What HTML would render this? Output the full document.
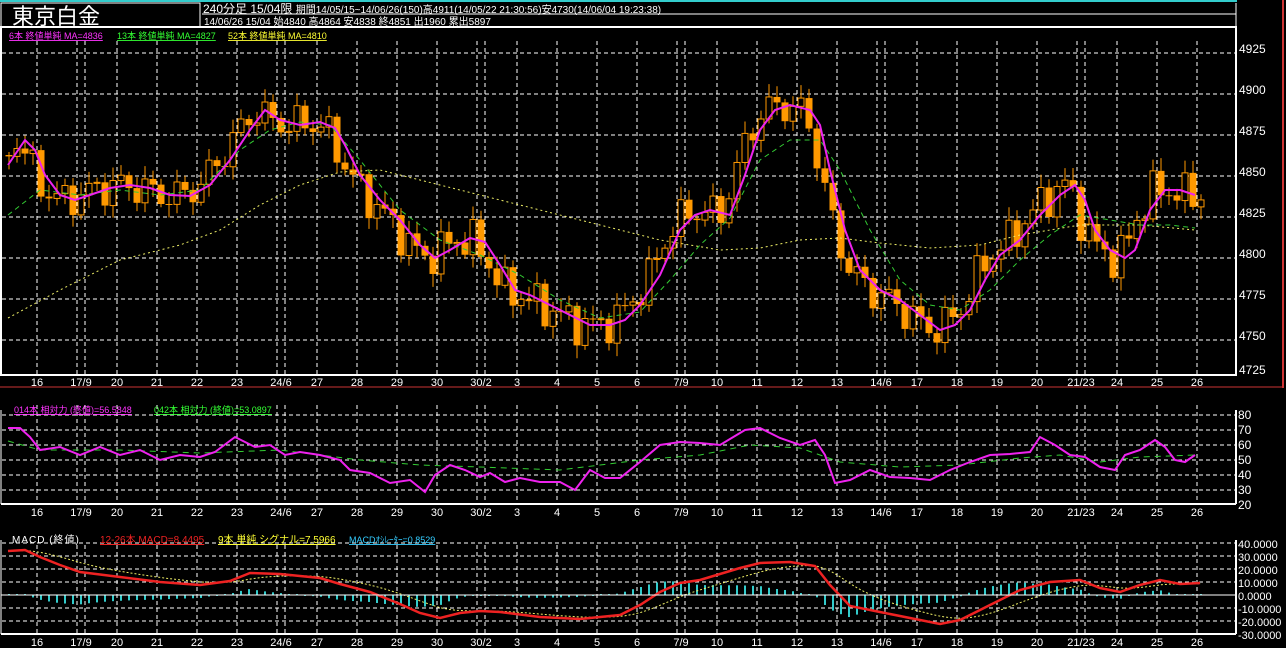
<!DOCTYPE html>
<html><head><meta charset="utf-8"><style>
html,body{margin:0;padding:0;background:#000;width:1286px;height:648px;overflow:hidden}
svg{position:absolute;left:0;top:0}
text{font-family:"Liberation Sans","Noto Sans CJK JP",sans-serif}
</style></head><body>
<svg id="s" width="1286" height="648" viewBox="0 0 1286 648" xmlns="http://www.w3.org/2000/svg">
<rect width="1286" height="648" fill="#000"/>
<line x1="0" y1="1" x2="1237" y2="1" stroke="#3cc" stroke-width="2"/>
<line x1="1283" y1="0" x2="1283" y2="388" stroke="#c33" stroke-width="2"/>
<line x1="0" y1="387" x2="1283" y2="387" stroke="#c33" stroke-width="1"/>
<rect x="1" y="3" width="199" height="24" fill="none" stroke="#fff" stroke-width="1"/>
<text x="12" y="24" fill="#fff" font-size="22">東京白金</text>
<line x1="202" y1="14" x2="1236" y2="14" stroke="#fff"/>
<line x1="202" y1="27" x2="1236" y2="27" stroke="#fff"/>
<line x1="1236" y1="3" x2="1236" y2="27" stroke="#fff"/>
<text x="203" y="13" fill="#fff" font-size="12">240分足 15/04限 <tspan font-size="10">期間14/05/15~14/06/26(150)高4911(14/05/22 21:30:56)安4730(14/06/04 19:23:38)</tspan></text>
<text x="204" y="25" fill="#fff" font-size="10">14/06/26 15/04 始4840 高4864 安4838 終4851 出1960 累出5897</text>
<text x="9" y="39" font-size="9" fill="#f3f" text-decoration="underline">6本 終値単純 MA=4836</text>
<text x="117" y="39" font-size="9" fill="#3f3" text-decoration="underline">13本 終値単純 MA=4827</text>
<text x="228" y="39" font-size="9" fill="#ff3" text-decoration="underline">52本 終値単純 MA=4810</text>
<g id="grid" stroke="#fff" stroke-dasharray="4,3" stroke-width="1"></g>
<g id="plot"></g>
<rect x="1" y="27" width="1235" height="348" fill="none" stroke="#fff" stroke-width="2"/>
<line x1="1" y1="504" x2="1236" y2="504" stroke="#fff" stroke-width="2"/>
<line x1="1236" y1="410" x2="1236" y2="504" stroke="#fff" stroke-width="2"/>
<line x1="1" y1="410" x2="1" y2="504" stroke="#fff" stroke-width="1"/>
<line x1="1" y1="634" x2="1236" y2="634" stroke="#fff" stroke-width="2"/>
<line x1="1236" y1="540" x2="1236" y2="634" stroke="#fff" stroke-width="2"/>
<line x1="1" y1="540" x2="1" y2="634" stroke="#fff" stroke-width="1"/>
<line x1="1" y1="595" x2="1236" y2="595" stroke="#fff" stroke-width="1"/>
<text x="14" y="413" font-size="9" fill="#f3f" text-decoration="underline">014本 相対力 (終値)=56.5848</text>
<text x="154" y="413" font-size="9" fill="#3f3" text-decoration="underline">042本 相対力 (終値)=53.0897</text>
<text x="12" y="543" font-size="10" fill="#fff" letter-spacing="1">MACD (終値)</text>
<text x="100" y="543" font-size="10" fill="#e22" text-decoration="underline">12-26本 MACD=8.4495</text>
<text x="218" y="543" font-size="10" fill="#ff3" text-decoration="underline">9本 単純 シグナル=7.5966</text>
<text x="349" y="543" font-size="9" fill="#3cf" text-decoration="underline">MACDｵｼﾚｰﾀｰ=0.8529</text>
<g id="labels" fill="#fff" font-size="12"></g>
</svg>
<script>
(function(){
var NS="http://www.w3.org/2000/svg";
function el(p,t,a,txt){var e=document.createElementNS(NS,t);for(var k in a)e.setAttribute(k,a[k]);if(txt!=null)e.textContent=txt;p.appendChild(e);return e;}
var g=document.getElementById('grid'),P=document.getElementById('plot'),L=document.getElementById('labels');
var vx=[37,77,85,117,157,197,237,277,285,317,357,397,437,477,485,517,557,597,637,677,685,717,757,797,837,877,885,917,957,997,1037,1077,1085,1117,1157,1197];
var panels=[[41,375],[405,504],[545,634]];
vx.forEach(function(x){panels.forEach(function(p){el(g,'line',{x1:x,y1:p[0],x2:x,y2:p[1]});});});
[53,94,135,176,217,258,299,340].forEach(function(y){el(g,'line',{x1:2,y1:y,x2:1236,y2:y});});
[415,430,445,460,475,490].forEach(function(y){el(g,'line',{x1:2,y1:y,x2:1236,y2:y});});
[543,556,569,582,608,621].forEach(function(y){el(g,'line',{x1:2,y1:y,x2:1236,y2:y});});
var dl=[[37,"16"],[81,"17/9"],[117,"20"],[157,"21"],[197,"22"],[237,"23"],[281,"24/6"],[317,"27"],[357,"28"],[397,"29"],[437,"30"],[481,"30/2"],[517,"3"],[557,"4"],[597,"5"],[637,"6"],[681,"7/9"],[717,"10"],[757,"11"],[797,"12"],[837,"13"],[881,"14/6"],[917,"17"],[957,"18"],[997,"19"],[1037,"20"],[1081,"21/23"],[1117,"24"],[1157,"25"],[1197,"26"]];
[386,516,646].forEach(function(y){dl.forEach(function(d){el(L,'text',{x:d[0],y:y,'text-anchor':'middle','font-size':'11'},d[1]);});});
[["4925",53],["4900",94],["4875",135],["4850",176],["4825",217],["4800",258],["4775",299],["4750",340],["4725",374]].forEach(function(d){el(L,'text',{x:1239,y:d[1]},d[0]);});
[80,70,60,50,40,30,20].forEach(function(v,i){el(L,'text',{x:1238,y:419+i*15},""+v);});
["40.0000","30.0000","20.0000","10.0000","0.0000","-10.0000","-20.0000","-30.0000"].forEach(function(v,i){el(L,'text',{x:1238,y:548+i*13,'font-size':'11'},v);});
function interp(pts,x){if(x<=pts[0][0])return pts[0][1];for(var i=1;i<pts.length;i++){if(x<=pts[i][0]){var a=pts[i-1],b=pts[i];return a[1]+(b[1]-a[1])*(x-a[0])/(b[0]-a[0]);}}return pts[pts.length-1][1];}
function pline(pts,col,w,dash){var d=pts.map(function(p,i){return (i?'L':'M')+p[0]+','+p[1];}).join('');var a={d:d,fill:'none',stroke:col,'stroke-width':w};if(dash)a['stroke-dasharray']=dash;el(P,'path',a);}
var ma6=[[8,165],[25,140],[35,150],[45,175],[60,195],[75,200],[90,195],[110,188],[130,185],[150,188],[170,195],[190,196],[210,185],[230,160],[250,130],[265,110],[280,120],[300,125],[320,122],[335,128],[345,145],[360,175],[380,200],[400,220],[420,245],[435,258],[450,250],[470,238],[485,242],[500,265],[515,290],[530,295],[550,305],[570,315],[590,325],[610,325],[625,320],[640,305],[660,275],[680,230],[695,215],[710,210],[730,215],[745,175],[760,130],[775,110],[790,105],[810,110],[820,125],[830,170],[845,230],[860,270],[880,290],[900,300],[920,315],[940,330],[955,325],[970,310],[985,280],[1000,255],[1020,240],[1040,215],[1060,195],[1075,185],[1085,200],[1095,230],[1110,250],[1125,258],[1135,250],[1150,210],[1165,190],[1180,190],[1195,195]];
var ma13=[[8,215],[40,190],[80,195],[120,190],[160,195],[200,190],[240,150],[270,130],[300,122],[330,125],[360,160],[400,210],[440,240],[480,255],[520,275],[560,300],[600,318],[640,312],[670,280],[700,245],[730,218],[760,160],[790,140],[820,140],[840,170],[870,230],[900,280],[930,305],[960,310],[990,290],[1020,260],[1050,235],[1080,215],[1110,220],[1140,225],[1170,225],[1195,228]];
var ma52=[[8,318],[60,290],[120,260],[180,245],[220,230],[260,205],[300,185],[340,172],[380,170],[420,180],[480,195],[540,210],[600,225],[660,240],[720,250],[760,248],[800,240],[840,238],[880,243],[930,248],[980,245],[1020,235],[1080,225],[1140,225],[1195,230]];
var prev=interp(ma6,0)-10;
for(var i=0;i<150;i++){var x=9+i*8;var c=interp(ma6,x+10);var n=Math.sin(i*1.7)*14+Math.sin(i*3.1+1)*9;var cl=c+n;var op=prev;prev=cl;
 var tp=Math.min(op,cl),bt=Math.max(op,cl);if(bt-tp<1)bt=tp+1;
 var wt=tp-(3+Math.abs(Math.sin(i*2.3))*10),wb=bt+(3+Math.abs(Math.cos(i*1.9))*10);
 el(P,'line',{x1:x,y1:wt,x2:x,y2:wb,stroke:'#f90','stroke-width':1});
 if(cl<op)el(P,'rect',{x:x-3,y:tp,width:6,height:bt-tp,fill:'#000',stroke:'#f90','stroke-width':1});
 else el(P,'rect',{x:x-3.5,y:tp,width:7,height:bt-tp,fill:'#f90'});}
pline(ma52,'#ee6',1,'2,3');pline(ma13,'#3c3',1,'5,4');pline(ma6,'#e2e',2);
var r14=[[8,428],[20,428],[30,437],[40,450],[60,447],[80,455],[100,447],[120,455],[140,450],[160,460],[180,455],[200,457],[215,452],[235,437],[255,447],[270,445],[285,455],[300,452],[320,455],[340,460],[350,470],[370,473],[390,483],[410,480],[425,492],[435,475],[450,465],[465,470],[480,477],[490,473],[505,482],[520,478],[540,482],[560,482],[575,490],[590,470],[605,478],[620,478],[640,462],[660,445],[680,442],[700,443],[720,445],[745,430],[760,428],[780,438],[800,445],[815,440],[825,455],[835,483],[850,480],[870,470],[890,477],[910,478],[930,480],[950,470],[970,462],[990,455],[1010,454],[1030,452],[1040,437],[1055,445],[1070,455],[1085,457],[1100,467],[1115,470],[1125,455],[1140,450],[1155,440],[1165,447],[1175,460],[1185,462],[1195,455]];
var r42=[[8,441],[40,450],[120,450],[200,453],[280,450],[320,455],[360,460],[420,465],[480,467],[560,470],[600,465],[640,460],[700,455],[750,445],[800,448],[840,462],[900,467],[960,465],[1020,458],[1060,455],[1100,462],[1140,457],[1195,455]];
pline(r42,'#3c3',1,'6,5');pline(r14,'#e2e',2);
var mc=[[8,551],[25,550],[40,557],[60,565],[80,572],[120,577],[160,582],[200,585],[230,581],[250,573],[280,574],[320,578],[340,584],[370,592],[400,604],[420,613],[440,618],[460,613],[480,611],[500,612],[540,617],[580,619],[620,615],[640,605],[660,592],[680,583],[700,580],[740,568],[760,563],[790,562],[815,566],[830,585],[850,606],[880,612],[910,618],[940,624],[960,620],[990,605],[1020,590],[1050,582],[1080,580],[1100,588],[1120,592],[1140,585],[1160,580],[1180,584],[1200,583]];
var ms=[],ss=[],sp=[];for(var i=0;i<150;i++){ms.push(interp(mc,9+i*8));}
var s=ms[0];for(var i=0;i<150;i++){s=s+(ms[i]-s)*0.2;ss.push(s);sp.push([9+i*8,s]);}
for(var i=0;i<150;i++){var h=(ss[i]-ms[i])*1.0;if(Math.abs(h)<1)h=h<0?-1:1;el(P,'line',{x1:9+i*8,y1:595,x2:9+i*8,y2:595-h,stroke:'#3cc','stroke-width':2});}
pline(sp,'#ee6',1,'2,2');pline(mc,'#e22',2.5);
})();
</script>
</body></html>
